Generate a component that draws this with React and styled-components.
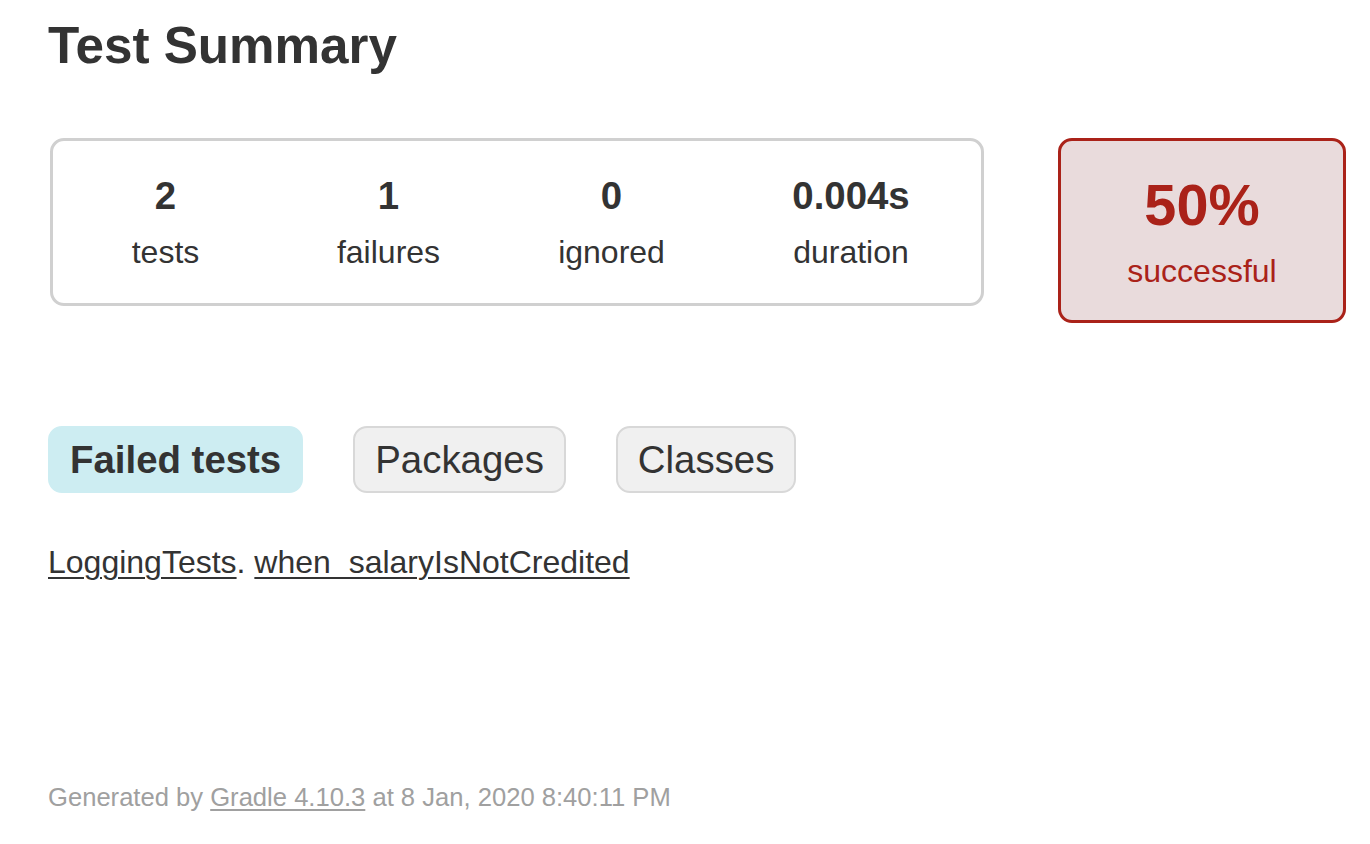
import React from "react";
import styled, { createGlobalStyle } from "styled-components";

const GlobalStyle = createGlobalStyle`
  body {
    margin: 0;
    padding: 0;
    background: #fff;
    font-family: "Liberation Sans", Arial, Helvetica, sans-serif;
    font-size: 32px;
    color: #333;
  }
`;

const Content = styled.div`
  padding: 16px 24px 40px 48px;
`;

const Title = styled.h1`
  margin: 0;
  font-size: 51.2px;
  font-weight: bold;
`;

const SummaryRow = styled.div`
  display: flex;
  align-items: flex-start;
  gap: 74px;
  margin: 63px 0 0 2px;
`;

const SummaryGroup = styled.div`
  display: grid;
  grid-template-columns: 223px 223px 223px 256px;
  width: 934px;
  box-sizing: border-box;
  padding: 0 1px;
  border: 3px solid #d0d0d0;
  border-radius: 14px;
`;

const InfoBox = styled.div`
  padding: 33px 0 32px;
  text-align: center;
`;

const Counter = styled.div`
  font-size: 38.4px;
  font-weight: bold;
  margin-bottom: 16px;
`;

const Label = styled.div`
  font-size: 32px;
`;

const SuccessRate = styled.div`
  width: 288px;
  box-sizing: border-box;
  padding: 31px 0 30px;
  text-align: center;
  border: 3px solid #aa2219;
  border-radius: 14px;
  background: #e9dbdc;
  color: #aa2219;
`;

const Percent = styled.div`
  font-size: 57.6px;
  font-weight: bold;
  margin-bottom: 15px;
`;

const Tabs = styled.ul`
  display: flex;
  gap: 50px;
  list-style: none;
  margin: 103px 0 0;
  padding: 0;
`;

const Tab = styled.li`
  padding: 9.5px 20px;
  border: 2px solid ${(p) => (p.$selected ? "#cdedf2" : "#d8d8d8")};
  background: ${(p) => (p.$selected ? "#cdedf2" : "#f0f0f0")};
  border-radius: 14px;
  font-size: 38.4px;
  font-weight: ${(p) => (p.$selected ? "bold" : "normal")};
  color: #333;
`;

const FailedList = styled.div`
  margin-top: 50.5px;
  font-size: 32px;
`;

const Link = styled.a`
  color: #333;
  text-decoration: underline;
  text-decoration-thickness: 2px;
  text-underline-offset: 4px;
`;

const Footer = styled.div`
  margin-top: 202px;
  font-size: 25.6px;
  color: #a0a0a0;
`;

const FooterLink = styled.a`
  color: #a0a0a0;
  text-decoration: underline;
  text-underline-offset: 3px;
`;

const stats = [
  { value: "2", label: "tests" },
  { value: "1", label: "failures" },
  { value: "0", label: "ignored" },
  { value: "0.004s", label: "duration" },
];

const tabs = [
  { name: "Failed tests", selected: true },
  { name: "Packages" },
  { name: "Classes" },
];

export default function App() {
  return (
    <>
      <GlobalStyle />
      <Content>
        <Title>Test Summary</Title>
        <SummaryRow>
          <SummaryGroup>
            {stats.map((s) => (
              <InfoBox key={s.label}>
                <Counter>{s.value}</Counter>
                <Label>{s.label}</Label>
              </InfoBox>
            ))}
          </SummaryGroup>
          <SuccessRate>
            <Percent>50%</Percent>
            <Label>successful</Label>
          </SuccessRate>
        </SummaryRow>
        <Tabs>
          {tabs.map((t) => (
            <Tab key={t.name} $selected={t.selected}>
              {t.name}
            </Tab>
          ))}
        </Tabs>
        <FailedList>
          <Link href="#">LoggingTests</Link>. <Link href="#">when_salaryIsNotCredited</Link>
        </FailedList>
        <Footer>
          Generated by <FooterLink href="#">Gradle 4.10.3</FooterLink> at 8 Jan, 2020 8:40:11 PM
        </Footer>
      </Content>
    </>
  );
}
